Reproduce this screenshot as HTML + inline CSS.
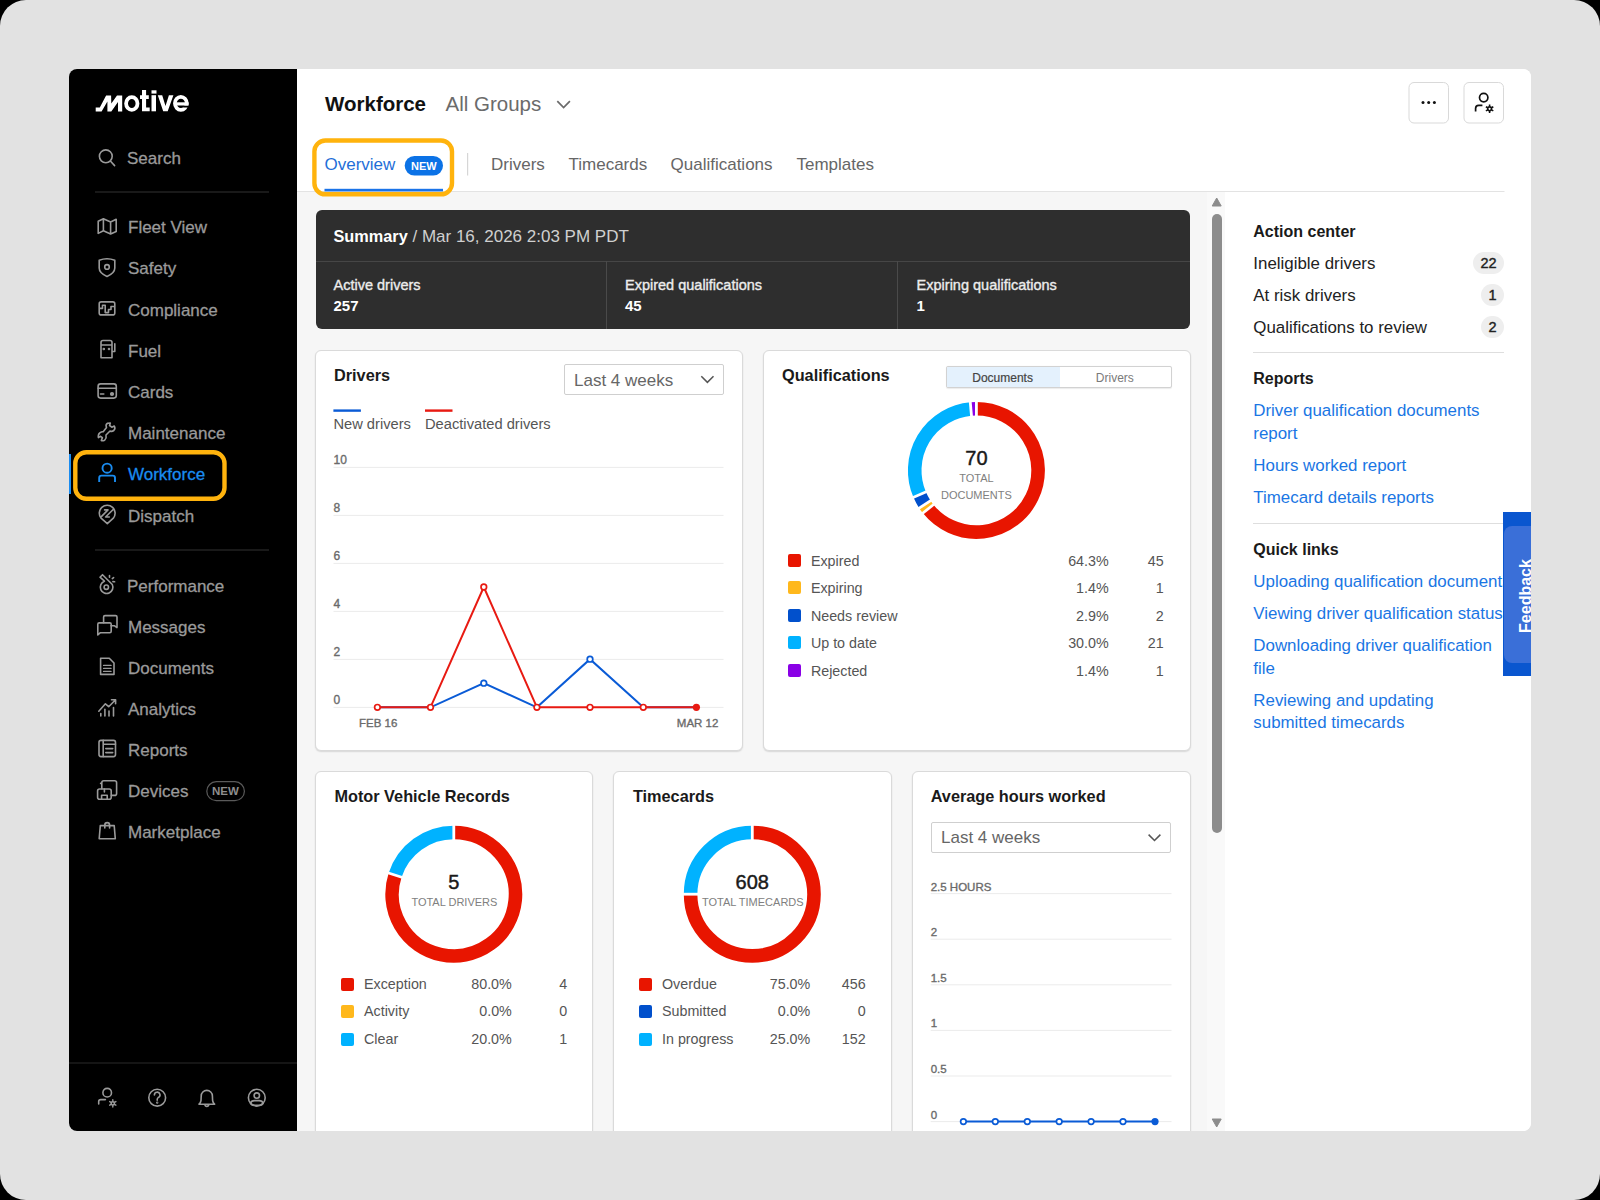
<!DOCTYPE html>
<html><head><meta charset="utf-8">
<style>
*{box-sizing:border-box}
html,body{margin:0;padding:0;width:1600px;height:1200px;overflow:hidden;background:#000;font-family:"Liberation Sans",sans-serif}
.a{position:absolute}
.t{position:absolute;white-space:nowrap;line-height:1}
#bg{position:absolute;left:0;top:0;width:1600px;height:1200px;background:#e2e2e2;border-radius:26px}
#win{position:absolute;left:69px;top:69px;width:1462px;height:1062px;overflow:hidden;border-radius:8px;background:#fff}
#in{position:absolute;left:-69px;top:-69px;width:1600px;height:1200px}
.nav{color:#9a9a9a;-webkit-text-stroke:0.3px currentColor}
.card{position:absolute;background:#fff;border:1px solid #dadada;border-radius:6px;box-shadow:0 1px 1.5px rgba(0,0,0,.13)}
.sq{position:absolute;border-radius:2px}
</style></head><body>
<div id="bg"></div>
<div id="win"><div id="in">
  <div class="a" style="left:69px;top:69px;width:228px;height:1062px;background:#000"></div>
  <div class="a" style="left:297px;top:69px;width:1234px;height:1062px;background:#fff"></div>
  <div class="a" style="left:297px;top:192px;width:910px;height:939px;background:#f6f6f6"></div>
  <div class="a" style="left:1207px;top:192px;width:18px;height:939px;background:#f9f9f9"></div>

  <svg class="a" style="left:0;top:0" width="1600" height="1200" viewBox="0 0 1600 1200">
    <!-- logo -->
    <g fill="#fff">
      <path d="M95.7 111.4 L95.7 107.5 L99.8 107.5 L106.1 95.4 L111.1 95.4 L111.3 103.6 L117 95.4 L122.2 95.4 L122.2 111.4 L118 111.4 L118 101.9 L111.3 111.4 L107.4 111.4 L107.4 101.4 L101.6 111.4 Z"/>
      <ellipse cx="131.8" cy="103.5" rx="5.7" ry="6.3" fill="none" stroke="#fff" stroke-width="3.8"/>
      <path d="M142 90 H146.1 V95.2 H148.8 V99 H146.1 V107.6 H149.7 V111.3 H142 V99 H140 V95.2 H142 Z"/>
      <rect x="151.5" y="90.3" width="5" height="3.3"/>
      <rect x="151.5" y="95.2" width="4.5" height="16.1"/>
      <path d="M157.8 95.2 H162.2 L165.5 106 L168.9 95.2 H173.4 L167.7 111.3 H163.2 Z"/>
      <ellipse cx="180.85" cy="103.35" rx="5.95" ry="6.5" fill="none" stroke="#fff" stroke-width="3.7"/><rect x="183.2" y="105.5" width="7" height="2" fill="#000"/><rect x="175" y="102.3" width="13.6" height="3.2" fill="#fff"/>
    </g>
    <g fill="none" stroke="#9a9a9a" stroke-width="1.6" stroke-linecap="round" stroke-linejoin="round">
      <!-- search -->
      <circle cx="105.8" cy="156.3" r="6.4"/>
      <path d="M110.6 161.2 L114.6 165.6"/>
      <!-- map -->
      <path d="M98.2 221.2 L103.4 218.8 L110.6 222 L116.2 219.3 V231.4 L110.6 234 L103.4 230.8 L98.2 233.4 Z M103.4 218.8 V230.8 M110.6 222 V234"/>
      <!-- shield -->
      <path d="M99.2 260.2 Q107 257.2 114.8 260.2 V268 Q114.8 273 107 276.4 Q99.2 273 99.2 268 Z"/>
      <circle cx="107" cy="266.9" r="2.3"/>
      <!-- compliance -->
      <rect x="99.2" y="301.9" width="15.6" height="13" rx="2"/>
      <path d="M100 308.4 H102.5 V305.2 H105.2 V312.6 H108.5 V309.5 H111 V306.5 H114"/>
      <!-- fuel -->
      <path d="M101 357.8 V342.5 Q101 340.5 103 340.5 H110 Q112 340.5 112 342.5 V357.8 Z M101 345 H112 M112 351.5 H114.8 V343.8"/>
      <circle cx="103.8" cy="349" r="0.5" fill="#9a9a9a"/>
      <circle cx="109" cy="349" r="0.5" fill="#9a9a9a"/>
      <!-- card -->
      <rect x="98.1" y="383.9" width="18.2" height="14.2" rx="2.5"/>
      <path d="M98.1 388.2 H116.3 M100.5 394 H103.8"/>
      <circle cx="112" cy="394" r="1.3" fill="#9a9a9a"/>
      <!-- wrench -->
      <path d="M106.5 427.5 Q105.2 424.5 107.5 423.2 L110.3 423 L109.6 425.5 L111.8 427.2 L114.2 426 Q115.8 428.5 113.8 430.5 Q111.8 432 110 431 L106 435 Q106.8 437.8 104.6 440.2 Q102.5 441.2 101.3 440.6 L102.4 437.6 L100.3 436.3 L98.4 437.6 Q97.8 434.5 99.8 432.8 Q101.8 431.4 103.2 431.8 Z"/>
      <!-- dispatch -->
      <path d="M107.3 523.6 L101.05 518.16 A7.9 7.9 0 1 1 113.35 518.16 Z M104.6 509.9 H108 L101.6 516.4 M109.3 517 H105.6 L113.2 509.5"/>
      <!-- performance whistle -->
      <path d="M100 577.2 L102.5 574.7 L112.3 584.5 A6.3 6.3 0 1 1 104.4 581.3 L104.2 580.8 Z"/>
      <circle cx="106.3" cy="587.2" r="2.2"/>
      <path d="M109.5 575.5 V577.2 M112.3 578.6 L113.6 577.6 M112.9 581.6 L114.6 581.8"/>
      <!-- messages -->
      <path d="M103.6 622.8 V617 Q103.6 615.6 105 615.6 H115.6 Q117 615.6 117 617 V627.6 L114.6 625.8 H111"/>
      <path d="M97.8 635 V624.3 Q97.8 622.9 99.2 622.9 H109.8 Q111.2 622.9 111.2 624.3 V631.3 Q111.2 632.7 109.8 632.7 H100.4 Z"/>
      <!-- documents -->
      <path d="M100.6 658.3 H109.3 L114 663 V674.4 H100.6 Z"/>
      <path d="M103.6 665.4 H111 M103.6 668.4 H111 M103.6 671.4 H111" stroke-width="1.4"/>
      <!-- analytics -->
      <path d="M98.8 711.2 L105.4 703.8 L108.7 706.7 L115.3 700 M111.5 699.7 H115.6 V703.8 M100.8 713.5 V716 M104.9 709.2 V716 M109 711 V716 M113.5 707.5 V716"/>
      <!-- reports -->
      <rect x="99" y="740.4" width="16.5" height="16.2" rx="2"/>
      <path d="M103.2 740.4 V756.6 M103.2 744.3 H115.5 M105.8 748.6 H112.7 M105.8 752.6 H112.7"/>
      <!-- devices -->
      <path d="M101.8 788.6 V782.8 Q101.8 780.8 103.8 780.8 H114.6 Q116.6 780.8 116.6 782.8 V793.4 Q116.6 795.4 114.6 795.4 H111.4 M101.8 783.4 L100.6 783.4"/>
      <rect x="97.6" y="789" width="13.6" height="10.2" rx="2"/>
      <path d="M101.6 799.2 V795.2 H107.2 V799.2 M104.4 789 V792"/>
      <!-- marketplace -->
      <path d="M100.3 825.6 H114.2 L115.3 838.8 H99.2 Z M104.8 828 V825 A2.4 2.4 0 0 1 109.6 825 V828"/>
      <!-- bottom icons -->
      <circle cx="107.2" cy="1092.7" r="4.3"/>
      <path d="M98.7 1104 V1101.4 Q98.7 1099.6 100.8 1099.6 H105.4"/>
      <circle cx="112.8" cy="1103.4" r="1.6"/>
      <path d="M112.8 1099.8 V1101.4 M112.8 1105.4 V1107 M109.7 1101.6 L111.1 1102.4 M114.5 1104.4 L115.9 1105.2 M109.7 1105.2 L111.1 1104.4 M114.5 1102.4 L115.9 1101.6" stroke-width="1.4"/>
      <circle cx="157.2" cy="1097.7" r="8.4"/>
      <path d="M154.4 1095 A2.8 2.8 0 1 1 158.2 1097.6 Q157.2 1098.3 157.2 1099.6 V1100.2"/>
      <circle cx="157.2" cy="1102.6" r="0.4" fill="#9a9a9a"/>
      <path d="M199 1104.2 Q200.6 1103 201 1100.5 L201.2 1096 A5.6 5.6 0 0 1 212.4 1096 L212.6 1100.5 Q213 1103 214.6 1104.2 Z M204.9 1104.5 A1.9 1.9 0 0 0 208.7 1104.5"/>
      <circle cx="256.8" cy="1097.7" r="8.4"/>
      <circle cx="256.8" cy="1095.6" r="2.7"/>
      <path d="M250.5 1103.3 Q251.2 1100.6 254.5 1100.6 H259.1 Q262.4 1100.6 263.1 1103.3 Q262.4 1105.3 259.1 1105.3 H254.5 Q251.2 1105.3 250.5 1103.3 Z"/>
    </g>
    <!-- workforce icon blue -->
    <g fill="none" stroke="#1a8cf0" stroke-width="1.9" stroke-linecap="butt">
      <circle cx="107.1" cy="468.2" r="4.6"/>
      <path d="M99.2 481.9 V477.9 Q99.2 475.6 101.5 475.6 H112.7 Q115 475.6 115 477.9 V481.9"/>
    </g>
    <!-- dividers -->
    <rect x="95" y="191.5" width="174" height="1" fill="#333"/>
    <rect x="95" y="549.5" width="174" height="1" fill="#333"/>
    <rect x="69" y="1062.5" width="228" height="1" fill="#2a2a2a"/>
    <!-- active bar -->
    <rect x="69" y="454" width="2" height="40" fill="#1a8cf0"/>
    <!-- orange highlight -->
    <rect x="75.3" y="452.3" width="149.2" height="46.4" rx="11" fill="none" stroke="#ffb30d" stroke-width="4.4"/>
    <!-- NEW badge devices -->
    <rect x="206.8" y="781.7" width="37.6" height="19" rx="9.5" fill="none" stroke="#5a5a5a" stroke-width="1.2"/>
  </svg>
<div class="t nav" style="left:127.0px;top:150px;font-size:17px;">Search</div>
<div class="t nav" style="left:128.0px;top:219px;font-size:17px;">Fleet View</div>
<div class="t nav" style="left:128.0px;top:260px;font-size:17px;">Safety</div>
<div class="t nav" style="left:128.0px;top:302px;font-size:17px;">Compliance</div>
<div class="t nav" style="left:128.0px;top:343px;font-size:17px;">Fuel</div>
<div class="t nav" style="left:128.0px;top:384px;font-size:17px;">Cards</div>
<div class="t nav" style="left:128.0px;top:425px;font-size:17px;">Maintenance</div>
<div class="t nav" style="left:128.0px;top:466px;font-size:17px;color:#1a8cf0">Workforce</div>
<div class="t nav" style="left:128.0px;top:508px;font-size:17px;">Dispatch</div>
<div class="t nav" style="left:127.0px;top:578px;font-size:17px;">Performance</div>
<div class="t nav" style="left:128.0px;top:619px;font-size:17px;">Messages</div>
<div class="t nav" style="left:128.0px;top:660px;font-size:17px;">Documents</div>
<div class="t nav" style="left:128.0px;top:701px;font-size:17px;">Analytics</div>
<div class="t nav" style="left:128.0px;top:742px;font-size:17px;">Reports</div>
<div class="t nav" style="left:128.0px;top:783px;font-size:17px;">Devices</div>
<div class="t nav" style="left:128.0px;top:824px;font-size:17px;">Marketplace</div>
<div class="t" style="left:206.7px;width:37.6px;text-align:center;top:786px;font-size:11.5px;font-weight:700;color:#8e8e8e">NEW</div>
  <svg class="a" style="left:0;top:0" width="1600" height="200" viewBox="0 0 1600 200">
    <path d="M557.3 101.2 L563.6 107.6 L569.9 101.2" fill="none" stroke="#6b6b6b" stroke-width="1.7"/>
    <rect x="1409" y="82.5" width="39.5" height="40.5" rx="5" fill="#fff" stroke="#d9d9d9"/>
    <rect x="1464" y="82.5" width="39.5" height="40.5" rx="5" fill="#fff" stroke="#d9d9d9"/>
    <circle cx="1423" cy="102.6" r="1.5" fill="#111"/><circle cx="1428.7" cy="102.6" r="1.5" fill="#111"/><circle cx="1434.4" cy="102.6" r="1.5" fill="#111"/>
    <g fill="none" stroke="#111" stroke-width="1.7">
      <circle cx="1483.7" cy="97.6" r="4.2"/>
      <path d="M1475.6 111.4 V108.4 Q1475.6 105.3 1478.7 105.3 H1482.4"/>
    </g>
    <g fill="none" stroke="#111" stroke-width="1.6">
      <circle cx="1489.6" cy="108.8" r="1.9"/>
      <path d="M1489.6 104.6 V106.6 M1489.6 111 V113 M1485.9 106.7 L1487.7 107.7 M1491.5 109.9 L1493.3 110.9 M1485.9 110.9 L1487.7 109.9 M1491.5 107.7 L1493.3 106.7"/>
    </g>
    <!-- tabs -->
    <rect x="297" y="191" width="1207.5" height="1" fill="#e3e3e3"/>
    <rect x="467" y="153" width="1.2" height="22.5" fill="#d6d6d6"/>
    <rect x="324.5" y="188.8" width="118.5" height="2.6" fill="#1a73e8"/>
    <rect x="404.7" y="156" width="38.3" height="19.5" rx="9.75" fill="#0b72e6"/>
    <rect x="314.4" y="140.5" width="137.6" height="53.8" rx="11" fill="none" stroke="#ffb30d" stroke-width="4.4"/>
  </svg>
<div class="t" style="left:325.0px;top:94px;font-size:20.5px;font-weight:700;color:#111">Workforce</div>
<div class="t" style="left:445.5px;top:94px;font-size:20.5px;color:#6b6b6b">All Groups</div>
<div class="t" style="left:324.5px;top:156px;font-size:17px;color:#1f6fd8">Overview</div>
<div class="t" style="left:404.7px;width:38.3px;text-align:center;top:161px;font-size:11px;font-weight:700;color:#fff">NEW</div>
<div class="t" style="left:491.0px;top:156px;font-size:17px;color:#666">Drivers</div>
<div class="t" style="left:568.5px;top:156px;font-size:17px;color:#666">Timecards</div>
<div class="t" style="left:670.5px;top:156px;font-size:17px;color:#666">Qualifications</div>
<div class="t" style="left:796.5px;top:156px;font-size:17px;color:#666">Templates</div>
<div class="a" style="left:315.5px;top:210.3px;width:874px;height:118.5px;background:#2e2e2e;border-radius:6px"></div>
<div class="a" style="left:315.5px;top:260.5px;width:874px;height:1px;background:#464646"></div>
<div class="a" style="left:606px;top:261px;width:1px;height:67.5px;background:#4a4a4a"></div>
<div class="a" style="left:897px;top:261px;width:1px;height:67.5px;background:#4a4a4a"></div>
<div class="t" style="left:333.5px;top:228px;font-size:16.3px;color:#d0d0d0"><b style="color:#fff">Summary</b><span style="font-size:17px"> / Mar 16, 2026 2:03 PM PDT</span></div>
<div class="t" style="left:333.5px;top:278px;font-size:14.5px;color:#ececec;-webkit-text-stroke:0.35px currentColor">Active drivers</div>
<div class="t" style="left:333.5px;top:298px;font-size:15px;font-weight:700;color:#fff">257</div>
<div class="t" style="left:625.0px;top:278px;font-size:14.5px;color:#ececec;-webkit-text-stroke:0.35px currentColor">Expired qualifications</div>
<div class="t" style="left:625.0px;top:298px;font-size:15px;font-weight:700;color:#fff">45</div>
<div class="t" style="left:916.6px;top:278px;font-size:14.5px;color:#ececec;-webkit-text-stroke:0.35px currentColor">Expiring qualifications</div>
<div class="t" style="left:916.6px;top:298px;font-size:15px;font-weight:700;color:#fff">1</div>
<div class="card" style="left:314.5px;top:349.5px;width:428.0px;height:401.0px"></div>
<div class="card" style="left:762.5px;top:349.5px;width:428.5px;height:401.0px"></div>
<div class="card" style="left:314.5px;top:770.5px;width:278.5px;height:389.5px"></div>
<div class="card" style="left:612.5px;top:770.5px;width:279.0px;height:389.5px"></div>
<div class="card" style="left:911.5px;top:770.5px;width:279.0px;height:389.5px"></div>
<div class="a" style="left:564.4px;top:364.3px;width:159.5px;height:31px;border:1px solid #cfcfcf;border-radius:2px;background:#fff"></div>
<div class="a" style="left:930.7px;top:821.8px;width:240.8px;height:31px;border:1px solid #cfcfcf;border-radius:2px;background:#fff"></div>
<div class="a" style="left:945.6px;top:366.2px;width:226.1px;height:22px;border:1px solid #d2d2d2;border-radius:2px;background:#fff;overflow:hidden;box-shadow:0 0.5px 1px rgba(0,0,0,.08)"><div class="a" style="left:0;top:0;width:113.6px;height:20px;background:#e4f1fd"></div></div>
<svg class="a" style="left:0;top:0" width="1600" height="1200" viewBox="0 0 1600 1200"><rect x="333.5" y="466.9" width="390" height="1" fill="#ececec"/>
<rect x="333.5" y="514.9" width="390" height="1" fill="#ececec"/>
<rect x="333.5" y="562.9" width="390" height="1" fill="#ececec"/>
<rect x="333.5" y="610.9" width="390" height="1" fill="#ececec"/>
<rect x="333.5" y="658.9" width="390" height="1" fill="#ececec"/>
<rect x="333.5" y="706.9" width="390" height="1" fill="#ececec"/>
<polyline points="377.4,707.3 430.5,707.3 483.8,683.2 536.9,707.3 590.0,659.2 643.3,707.3 696.4,707.3" fill="none" stroke="#0a5bd6" stroke-width="2"/>
<circle cx="483.8" cy="683.2" r="2.8" fill="#fff" stroke="#0a5bd6" stroke-width="1.7"/>
<circle cx="590" cy="659.2" r="2.8" fill="#fff" stroke="#0a5bd6" stroke-width="1.7"/>
<polyline points="377.4,707.3 430.5,707.3 483.8,587.0 536.9,707.3 590.0,707.3 643.3,707.3 696.4,707.3" fill="none" stroke="#e81a12" stroke-width="2"/>
<circle cx="377.4" cy="707.3" r="2.8" fill="#fff" stroke="#e81a12" stroke-width="1.7"/>
<circle cx="430.5" cy="707.3" r="2.8" fill="#fff" stroke="#e81a12" stroke-width="1.7"/>
<circle cx="483.8" cy="587.0" r="2.8" fill="#fff" stroke="#e81a12" stroke-width="1.7"/>
<circle cx="536.9" cy="707.3" r="2.8" fill="#fff" stroke="#e81a12" stroke-width="1.7"/>
<circle cx="590" cy="707.3" r="2.8" fill="#fff" stroke="#e81a12" stroke-width="1.7"/>
<circle cx="643.3" cy="707.3" r="2.8" fill="#fff" stroke="#e81a12" stroke-width="1.7"/>
<circle cx="696.4" cy="707.3" r="3.6" fill="#e81a12"/>
<rect x="333.4" y="409.4" width="27.5" height="2.4" fill="#0a5bd6"/>
<rect x="425" y="409.4" width="27.5" height="2.4" fill="#e81a12"/>
<path d="M701.3 376.3 L707.4 382.4 L713.5 376.3" fill="none" stroke="#555" stroke-width="1.5"/>
<path d="M1148.6 834.6 L1154.5 840.5 L1160.4 834.6" fill="none" stroke="#555" stroke-width="1.5"/>
<path d="M976.40 408.70 A61.7 61.7 0 1 1 928.16 508.87" fill="none" stroke="#e81500" stroke-width="13.6"/>
<path d="M928.16 508.87 A61.7 61.7 0 0 1 924.91 504.39" fill="none" stroke="#ffb81c" stroke-width="13.6"/>
<path d="M924.91 504.39 A61.7 61.7 0 0 1 919.67 494.65" fill="none" stroke="#0150cc" stroke-width="13.6"/>
<path d="M919.67 494.65 A61.7 61.7 0 0 1 970.87 408.95" fill="none" stroke="#00b2ff" stroke-width="13.6"/>
<path d="M970.87 408.95 A61.7 61.7 0 0 1 976.40 408.70" fill="none" stroke="#8a00e6" stroke-width="13.6"/>
<path d="M976.40 416.50 L976.40 400.90" stroke="#fff" stroke-width="2.8"/>
<path d="M934.26 504.01 L922.06 513.73" stroke="#fff" stroke-width="2.8"/>
<path d="M931.42 500.09 L918.40 508.69" stroke="#fff" stroke-width="2.8"/>
<path d="M926.84 491.58 L912.49 497.72" stroke="#fff" stroke-width="2.8"/>
<path d="M971.57 416.72 L970.17 401.18" stroke="#fff" stroke-width="2.8"/>
<path d="M453.80 832.50 A61.7 61.7 0 1 1 395.12 875.13" fill="none" stroke="#e81500" stroke-width="13.6"/>
<path d="M395.12 875.13 A61.7 61.7 0 0 1 453.80 832.50" fill="none" stroke="#00b2ff" stroke-width="13.6"/>
<path d="M453.80 840.30 L453.80 824.70" stroke="#fff" stroke-width="2.8"/>
<path d="M402.54 877.54 L387.70 872.72" stroke="#fff" stroke-width="2.8"/>
<path d="M752.30 832.50 A61.7 61.7 0 1 1 690.60 894.20" fill="none" stroke="#e81500" stroke-width="13.6"/>
<path d="M690.60 894.20 A61.7 61.7 0 0 1 752.30 832.50" fill="none" stroke="#00b2ff" stroke-width="13.6"/>
<path d="M752.30 840.30 L752.30 824.70" stroke="#fff" stroke-width="2.8"/>
<path d="M698.40 894.20 L682.80 894.20" stroke="#fff" stroke-width="2.8"/>
<rect x="930.7" y="893.1" width="240.8" height="1" fill="#ececec"/>
<rect x="930.7" y="938.7" width="240.8" height="1" fill="#ececec"/>
<rect x="930.7" y="984.3" width="240.8" height="1" fill="#ececec"/>
<rect x="930.7" y="1029.9" width="240.8" height="1" fill="#ececec"/>
<rect x="930.7" y="1075.5" width="240.8" height="1" fill="#ececec"/>
<rect x="930.7" y="1121.1" width="240.8" height="1" fill="#ececec"/>
<polyline points="963.4,1121.6 995.3,1121.6 1027.3,1121.6 1059.2,1121.6 1091.1,1121.6 1123.0,1121.6 1155.0,1121.6" fill="none" stroke="#0a5bd6" stroke-width="2"/>
<circle cx="963.4" cy="1121.6" r="2.8" fill="#fff" stroke="#0a5bd6" stroke-width="1.7"/>
<circle cx="995.3" cy="1121.6" r="2.8" fill="#fff" stroke="#0a5bd6" stroke-width="1.7"/>
<circle cx="1027.3" cy="1121.6" r="2.8" fill="#fff" stroke="#0a5bd6" stroke-width="1.7"/>
<circle cx="1059.2" cy="1121.6" r="2.8" fill="#fff" stroke="#0a5bd6" stroke-width="1.7"/>
<circle cx="1091.1" cy="1121.6" r="2.8" fill="#fff" stroke="#0a5bd6" stroke-width="1.7"/>
<circle cx="1123.0" cy="1121.6" r="2.8" fill="#fff" stroke="#0a5bd6" stroke-width="1.7"/>
<circle cx="1155.0" cy="1121.6" r="3.6" fill="#0a5bd6"/></svg>
<div class="t" style="left:334.0px;top:367px;font-size:16.3px;font-weight:700;color:#1a1a1a">Drivers</div>
<div class="t" style="left:574.0px;top:372px;font-size:17px;color:#666">Last 4 weeks</div>
<div class="t" style="left:333.4px;top:417px;font-size:14.7px;color:#555">New drivers</div>
<div class="t" style="left:425.0px;top:417px;font-size:14.7px;color:#555">Deactivated drivers</div>
<div class="t" style="left:333.5px;top:454px;font-size:12px;color:#6a6a6a;-webkit-text-stroke:0.35px #6a6a6a">10</div>
<div class="t" style="left:333.5px;top:502px;font-size:12px;color:#6a6a6a;-webkit-text-stroke:0.35px #6a6a6a">8</div>
<div class="t" style="left:333.5px;top:550px;font-size:12px;color:#6a6a6a;-webkit-text-stroke:0.35px #6a6a6a">6</div>
<div class="t" style="left:333.5px;top:598px;font-size:12px;color:#6a6a6a;-webkit-text-stroke:0.35px #6a6a6a">4</div>
<div class="t" style="left:333.5px;top:646px;font-size:12px;color:#6a6a6a;-webkit-text-stroke:0.35px #6a6a6a">2</div>
<div class="t" style="left:333.5px;top:694px;font-size:12px;color:#6a6a6a;-webkit-text-stroke:0.35px #6a6a6a">0</div>
<div class="t" style="left:348.2px;width:60px;text-align:center;top:718px;font-size:11.5px;color:#6a6a6a;-webkit-text-stroke:0.35px #6a6a6a">FEB 16</div>
<div class="t" style="left:658.4px;width:60px;text-align:right;top:718px;font-size:11.5px;color:#6a6a6a;-webkit-text-stroke:0.35px #6a6a6a">MAR 12</div>
<div class="t" style="left:782.0px;top:367px;font-size:16.3px;font-weight:700;color:#1a1a1a">Qualifications</div>
<div class="t" style="left:952.6px;width:100px;text-align:center;top:372px;font-size:12px;color:#444;-webkit-text-stroke:0.2px currentColor">Documents</div>
<div class="t" style="left:1064.8px;width:100px;text-align:center;top:372px;font-size:12px;color:#7a7a7a">Drivers</div>
<div class="t" style="left:946.4px;width:60px;text-align:center;top:448px;font-size:20px;color:#1a1a1a;-webkit-text-stroke:0.45px currentColor">70</div>
<div class="t" style="left:936.4px;width:80px;text-align:center;top:473px;font-size:11px;color:#808080">TOTAL</div>
<div class="t" style="left:931.4px;width:90px;text-align:center;top:490px;font-size:11px;color:#808080">DOCUMENTS</div>
<div class="sq" style="left:788.3px;top:553.6px;width:13px;height:13px;background:#e81500"></div>
<div class="t" style="left:810.9px;top:554px;font-size:14.3px;color:#555">Expired</div>
<div class="t" style="left:1048.7px;width:60px;text-align:right;top:554px;font-size:14.3px;color:#555">64.3%</div>
<div class="t" style="left:1123.7px;width:40px;text-align:right;top:554px;font-size:14.3px;color:#555">45</div>
<div class="sq" style="left:788.3px;top:581.2px;width:13px;height:13px;background:#ffb81c"></div>
<div class="t" style="left:810.9px;top:581px;font-size:14.3px;color:#555">Expiring</div>
<div class="t" style="left:1048.7px;width:60px;text-align:right;top:581px;font-size:14.3px;color:#555">1.4%</div>
<div class="t" style="left:1123.7px;width:40px;text-align:right;top:581px;font-size:14.3px;color:#555">1</div>
<div class="sq" style="left:788.3px;top:608.8px;width:13px;height:13px;background:#0150cc"></div>
<div class="t" style="left:810.9px;top:609px;font-size:14.3px;color:#555">Needs review</div>
<div class="t" style="left:1048.7px;width:60px;text-align:right;top:609px;font-size:14.3px;color:#555">2.9%</div>
<div class="t" style="left:1123.7px;width:40px;text-align:right;top:609px;font-size:14.3px;color:#555">2</div>
<div class="sq" style="left:788.3px;top:636.4px;width:13px;height:13px;background:#00b2ff"></div>
<div class="t" style="left:810.9px;top:636px;font-size:14.3px;color:#555">Up to date</div>
<div class="t" style="left:1048.7px;width:60px;text-align:right;top:636px;font-size:14.3px;color:#555">30.0%</div>
<div class="t" style="left:1123.7px;width:40px;text-align:right;top:636px;font-size:14.3px;color:#555">21</div>
<div class="sq" style="left:788.3px;top:664.0px;width:13px;height:13px;background:#8a00e6"></div>
<div class="t" style="left:810.9px;top:664px;font-size:14.3px;color:#555">Rejected</div>
<div class="t" style="left:1048.7px;width:60px;text-align:right;top:664px;font-size:14.3px;color:#555">1.4%</div>
<div class="t" style="left:1123.7px;width:40px;text-align:right;top:664px;font-size:14.3px;color:#555">1</div>
<div class="t" style="left:334.4px;top:788px;font-size:16.3px;font-weight:700;color:#1a1a1a">Motor Vehicle Records</div>
<div class="t" style="left:423.8px;width:60px;text-align:center;top:872px;font-size:20px;color:#1a1a1a;-webkit-text-stroke:0.45px currentColor">5</div>
<div class="t" style="left:394.4px;width:120px;text-align:center;top:897px;font-size:11px;color:#808080">TOTAL DRIVERS</div>
<div class="sq" style="left:341px;top:978.0px;width:13.3px;height:13px;background:#e81500"></div>
<div class="t" style="left:364.0px;top:977px;font-size:14.3px;color:#555">Exception</div>
<div class="t" style="left:451.8px;width:60px;text-align:right;top:977px;font-size:14.3px;color:#555">80.0%</div>
<div class="t" style="left:527.2px;width:40px;text-align:right;top:977px;font-size:14.3px;color:#555">4</div>
<div class="sq" style="left:341px;top:1005.4px;width:13.3px;height:13px;background:#ffb81c"></div>
<div class="t" style="left:364.0px;top:1004px;font-size:14.3px;color:#555">Activity</div>
<div class="t" style="left:451.8px;width:60px;text-align:right;top:1004px;font-size:14.3px;color:#555">0.0%</div>
<div class="t" style="left:527.2px;width:40px;text-align:right;top:1004px;font-size:14.3px;color:#555">0</div>
<div class="sq" style="left:341px;top:1032.8px;width:13.3px;height:13px;background:#00b2ff"></div>
<div class="t" style="left:364.0px;top:1032px;font-size:14.3px;color:#555">Clear</div>
<div class="t" style="left:451.8px;width:60px;text-align:right;top:1032px;font-size:14.3px;color:#555">20.0%</div>
<div class="t" style="left:527.2px;width:40px;text-align:right;top:1032px;font-size:14.3px;color:#555">1</div>
<div class="t" style="left:632.9px;top:788px;font-size:16.3px;font-weight:700;color:#1a1a1a">Timecards</div>
<div class="t" style="left:722.3px;width:60px;text-align:center;top:872px;font-size:20px;color:#1a1a1a;-webkit-text-stroke:0.45px currentColor">608</div>
<div class="t" style="left:687.8px;width:130px;text-align:center;top:897px;font-size:11px;color:#808080">TOTAL TIMECARDS</div>
<div class="sq" style="left:639.2px;top:978.0px;width:13.3px;height:13px;background:#e81500"></div>
<div class="t" style="left:662.0px;top:977px;font-size:14.3px;color:#555">Overdue</div>
<div class="t" style="left:750.3px;width:60px;text-align:right;top:977px;font-size:14.3px;color:#555">75.0%</div>
<div class="t" style="left:825.7px;width:40px;text-align:right;top:977px;font-size:14.3px;color:#555">456</div>
<div class="sq" style="left:639.2px;top:1005.4px;width:13.3px;height:13px;background:#0150cc"></div>
<div class="t" style="left:662.0px;top:1004px;font-size:14.3px;color:#555">Submitted</div>
<div class="t" style="left:750.3px;width:60px;text-align:right;top:1004px;font-size:14.3px;color:#555">0.0%</div>
<div class="t" style="left:825.7px;width:40px;text-align:right;top:1004px;font-size:14.3px;color:#555">0</div>
<div class="sq" style="left:639.2px;top:1032.8px;width:13.3px;height:13px;background:#00b2ff"></div>
<div class="t" style="left:662.0px;top:1032px;font-size:14.3px;color:#555">In progress</div>
<div class="t" style="left:750.3px;width:60px;text-align:right;top:1032px;font-size:14.3px;color:#555">25.0%</div>
<div class="t" style="left:825.7px;width:40px;text-align:right;top:1032px;font-size:14.3px;color:#555">152</div>
<div class="t" style="left:930.7px;top:788px;font-size:16.3px;font-weight:700;color:#1a1a1a">Average hours worked</div>
<div class="t" style="left:941.0px;top:829px;font-size:17px;color:#666">Last 4 weeks</div>
<div class="t" style="left:930.7px;top:882px;font-size:11.5px;color:#6a6a6a;-webkit-text-stroke:0.35px #6a6a6a">2.5 HOURS</div>
<div class="t" style="left:930.7px;top:927px;font-size:11.5px;color:#6a6a6a;-webkit-text-stroke:0.35px #6a6a6a">2</div>
<div class="t" style="left:930.7px;top:973px;font-size:11.5px;color:#6a6a6a;-webkit-text-stroke:0.35px #6a6a6a">1.5</div>
<div class="t" style="left:930.7px;top:1018px;font-size:11.5px;color:#6a6a6a;-webkit-text-stroke:0.35px #6a6a6a">1</div>
<div class="t" style="left:930.7px;top:1064px;font-size:11.5px;color:#6a6a6a;-webkit-text-stroke:0.35px #6a6a6a">0.5</div>
<div class="t" style="left:930.7px;top:1110px;font-size:11.5px;color:#6a6a6a;-webkit-text-stroke:0.35px #6a6a6a">0</div>
<div class="a" style="left:1211.8px;top:213.5px;width:9.8px;height:619px;border-radius:5px;background:#8c8c8c"></div>
<svg class="a" style="left:0;top:0" width="1600" height="1200"><path d="M1212.2 206 L1216.7 198 L1221.2 206 Z" fill="#8c8c8c" stroke="#8c8c8c" stroke-width="1" stroke-linejoin="round"/><path d="M1212.2 1119 L1216.7 1127 L1221.2 1119 Z" fill="#8c8c8c" stroke="#8c8c8c" stroke-width="1" stroke-linejoin="round"/></svg>
<div class="t" style="left:1253.3px;top:224px;font-size:16px;font-weight:700;color:#1a1a1a">Action center</div>
<div class="t" style="left:1253.3px;top:256px;font-size:16.9px;color:#222">Ineligible drivers</div>
<div class="t" style="left:1253.3px;top:288px;font-size:16.9px;color:#222">At risk drivers</div>
<div class="t" style="left:1253.3px;top:320px;font-size:16.9px;color:#222">Qualifications to review</div>
<div class="a" style="left:1473.3px;top:252px;width:30.7px;height:22px;border-radius:11px;background:#eeeeee"></div>
<div class="a" style="left:1481.3px;top:284px;width:22.7px;height:22px;border-radius:11px;background:#eeeeee"></div>
<div class="a" style="left:1481.3px;top:316px;width:22.7px;height:22px;border-radius:11px;background:#eeeeee"></div>
<div class="t" style="left:1473.6px;width:30px;text-align:center;top:256px;font-size:14.5px;color:#222;-webkit-text-stroke:0.4px currentColor">22</div>
<div class="t" style="left:1482.6px;width:20px;text-align:center;top:288px;font-size:14.5px;color:#222;-webkit-text-stroke:0.4px currentColor">1</div>
<div class="t" style="left:1482.6px;width:20px;text-align:center;top:320px;font-size:14.5px;color:#222;-webkit-text-stroke:0.4px currentColor">2</div>
<div class="a" style="left:1253px;top:352px;width:251px;height:1px;background:#dedede"></div>
<div class="t" style="left:1253.3px;top:371px;font-size:16px;font-weight:700;color:#1a1a1a">Reports</div>
<div class="t" style="left:1253.3px;top:403px;font-size:16.9px;color:#1a76e4">Driver qualification documents</div>
<div class="t" style="left:1253.3px;top:426px;font-size:16.9px;color:#1a76e4">report</div>
<div class="t" style="left:1253.3px;top:458px;font-size:16.9px;color:#1a76e4">Hours worked report</div>
<div class="t" style="left:1253.3px;top:490px;font-size:16.9px;color:#1a76e4">Timecard details reports</div>
<div class="a" style="left:1253px;top:522.7px;width:251px;height:1px;background:#dedede"></div>
<div class="t" style="left:1253.3px;top:542px;font-size:16px;font-weight:700;color:#1a1a1a">Quick links</div>
<div class="t" style="left:1253.3px;top:574px;font-size:16.9px;color:#1a76e4">Uploading qualification documents</div>
<div class="t" style="left:1253.3px;top:606px;font-size:16.9px;color:#1a76e4">Viewing driver qualification status</div>
<div class="t" style="left:1253.3px;top:638px;font-size:16.9px;color:#1a76e4">Downloading driver qualification</div>
<div class="t" style="left:1253.3px;top:661px;font-size:16.9px;color:#1a76e4">file</div>
<div class="t" style="left:1253.3px;top:693px;font-size:16.9px;color:#1a76e4">Reviewing and updating</div>
<div class="t" style="left:1253.3px;top:715px;font-size:16.9px;color:#1a76e4">submitted timecards</div>
<div class="a" style="left:1502.7px;top:511.9px;width:40px;height:164.1px;background:#0a56cf"></div>
<div class="a" style="left:1504.4px;top:525.6px;width:40px;height:137px;border-radius:8px;background:#3a6fd8"></div>
<div class="t" style="left:1446px;top:587.5px;width:160px;text-align:center;font-size:16px;font-weight:700;color:#fff;transform:rotate(-90deg);transform-origin:80px 8px">Feedback</div>
</div></div>
</body></html>
